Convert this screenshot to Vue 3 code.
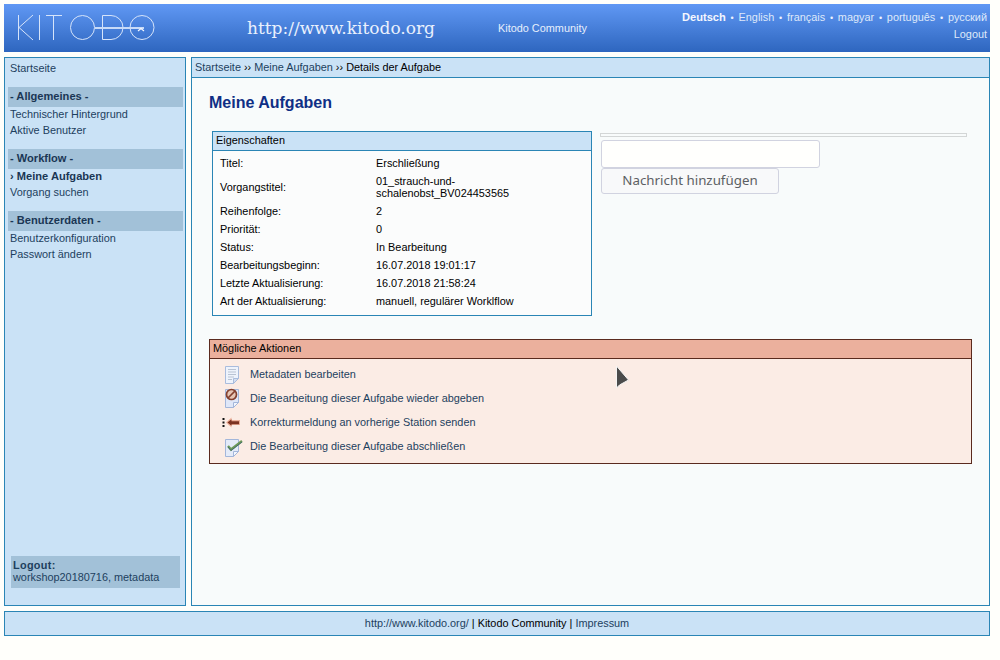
<template>
  <div class="page">
    <header class="top">
      <svg class="logo" width="140" height="28" viewBox="0 0 140 28" fill="none" stroke="#d6e4fa" stroke-width="1">
        <!-- K I T -->
        <path d="M1.500 1v25M16 1 2 13.500 16 26M22.500 1v25M29 1.500h16M36.500 1.500V26" />
        <!-- O D O, the line through them ends in a small arrow -->
        <circle cx="65.500" cy="13.500" r="12" />
        <path d="M85.500 1.500h8.500a12 12 0 0 1 0 24h-8.500z" />
        <circle cx="125" cy="13.500" r="12" />
        <path d="M78 14h49" stroke="#c8dbf8" stroke-width="2" />
        <path d="M121 17l3-2.500 3 2.500" stroke="#f6f9ff" stroke-width="1.200" />
      </svg>
      <span class="site-url">http://www.kitodo.org</span>
      <span class="community">Kitodo Community</span>
      <div class="top-right">
        <div class="langs">
          <template v-for="(l, i) in langs" :key="l">
            <span v-if="i" class="sep">•</span>
            <a :class="{ 'lang-active': i === 0 }">{{ l }}</a>
          </template>
        </div>
        <a class="logout-link">Logout</a>
      </div>
    </header>

    <div class="middle">
      <aside class="side">
        <a class="side-home">Startseite</a>
        <section v-for="g in menu" :key="g.title" class="side-group">
          <h4>{{ g.title }}</h4>
          <a v-for="item in g.items" :key="item.label" :class="{ current: item.current }">{{ item.label }}</a>
        </section>
        <div class="side-logout">
          <strong>Logout:</strong>
          <span>workshop20180716, metadata</span>
        </div>
      </aside>

      <main class="content">
        <div class="crumbs"><a>Startseite</a> ›› <a>Meine Aufgaben</a> ›› Details der Aufgabe</div>
        <h1>Meine Aufgaben</h1>

        <div class="details-row">
          <div class="props">
            <div class="props-head">Eigenschaften</div>
            <table>
              <tbody>
                <tr v-for="p in properties" :key="p[0]">
                  <td class="prop-key">{{ p[0] }}</td>
                  <td class="prop-val">{{ p[1] }}</td>
                </tr>
              </tbody>
            </table>
          </div>
          <div class="messages">
            <hr />
            <input type="text" />
            <button type="button">Nachricht hinzufügen</button>
          </div>
        </div>

        <div class="actions">
          <div class="actions-head">Mögliche Aktionen</div>
          <div class="actions-body">
            <a class="action">
              <svg width="22" height="24" viewBox="0 0 22 24">
                <path d="M3.500 4.500h13v12l-5 5h-8z" fill="#eef3fc" stroke="#a9bcdd" />
                <path d="M16.500 16.500h-5v5z" fill="#d5dff0" stroke="#a9bcdd" />
                <path d="M6 7.500h8M6 10h8M6 12.500h8M6 15h6M6 17.500h4" stroke="#b9c3d3" />
              </svg>
              <span>Metadaten bearbeiten</span>
            </a>
            <a class="action">
              <svg width="22" height="24" viewBox="0 0 22 24">
                <path d="M3.500 3.500h13v13l-5 5h-8z" fill="#dfe7f8" stroke="#a3b6da" />
                <path d="M16.500 16.500h-5v5z" fill="#f2f5fc" stroke="#a3b6da" />
                <circle cx="9.500" cy="8.500" r="5" fill="#e6c5b4" stroke="#84402f" stroke-width="1.700" />
                <path d="M6 12 13 5" stroke="#84402f" stroke-width="1.700" />
              </svg>
              <span>Die Bearbeitung dieser Aufgabe wieder abgeben</span>
            </a>
            <a class="action">
              <svg width="22" height="24" viewBox="0 0 22 24">
                <path d="M1.500 8v2M1.500 11.500v2M1.500 15v2" stroke="#111" stroke-width="2" />
                <path d="M4 12.500l5.500-5v2.500h8.500v5h-8.500v2.500z" fill="#eeb09a" />
                <path d="M5.500 12.500l4-3.300v2h7.500v3h-7.500v1.600z" fill="#7c3220" />
              </svg>
              <span>Korrekturmeldung an vorherige Station senden</span>
            </a>
            <a class="action">
              <svg width="22" height="24" viewBox="0 0 22 24">
                <path d="M3.500 5.500h13v12l-5 5h-8z" fill="#e4ebf9" stroke="#a3b6da" />
                <path d="M16.500 17.500h-5v5z" fill="#f4f7fc" stroke="#a3b6da" />
                <path d="M6 12l3 3.500L20 7" fill="none" stroke="#6d9a58" stroke-width="2.400" />
                <path d="M6 13l3 3.500L20 8" fill="none" stroke="#2f5577" stroke-width="0.700" />
              </svg>
              <span>Die Bearbeitung dieser Aufgabe abschließen</span>
            </a>
          </div>
        </div>

        <!-- mouse pointer caught in the screenshot -->
        <svg class="pointer" width="16" height="26" viewBox="0 0 16 26">
          <path d="M1.500 1v22l3-3L13.500 15z" fill="#4b4b4b" stroke="#f4f4f4" stroke-width="1" />
        </svg>
      </main>
    </div>

    <footer class="foot">
      <a>http://www.kitodo.org/</a> | Kitodo Community | <a>Impressum</a>
    </footer>
  </div>
</template>

<script setup>
const langs = ['Deutsch', 'English', 'français', 'magyar', 'português', 'русский']

const menu = [
  {
    title: '- Allgemeines -',
    items: [{ label: 'Technischer Hintergrund' }, { label: 'Aktive Benutzer' }],
  },
  {
    title: '- Workflow -',
    items: [{ label: '› Meine Aufgaben', current: true }, { label: 'Vorgang suchen' }],
  },
  {
    title: '- Benutzerdaten -',
    items: [{ label: 'Benutzerkonfiguration' }, { label: 'Passwort ändern' }],
  },
]

const properties = [
  ['Titel:', 'Erschließung'],
  ['Vorgangstitel:', '01_strauch-und-schalenobst_BV024453565'],
  ['Reihenfolge:', '2'],
  ['Priorität:', '0'],
  ['Status:', 'In Bearbeitung'],
  ['Bearbeitungsbeginn:', '16.07.2018 19:01:17'],
  ['Letzte Aktualisierung:', '16.07.2018 21:58:24'],
  ['Art der Aktualisierung:', 'manuell, regulärer Worklflow'],
]
</script>

<style>
html,
body {
  margin: 0;
  background: #fffffb;
}
</style>

<style scoped>
.page {
  width: 986px;
  padding: 4px 10px 0 4px;
  font-family: "Liberation Sans", Arial, sans-serif;
  font-size: 10.880px;
  line-height: 12px;
  color: #000;
}

a {
  color: #1d3f5e;
  text-decoration: none;
}

/* top bar */
.top {
  position: relative;
  display: flex;
  align-items: center;
  height: 48px;
  background: linear-gradient(#6098f4, #2e66bf);
  color: #e6effc;
}

.logo {
  margin-left: 13px;
  flex: none;
}

.site-url {
  margin-left: 90px;
  width: 251px;
  font-family: "DejaVu Serif", serif;
  font-size: 17px;
  line-height: 48px;
  color: #eaf1fd;
}

.top-right {
  position: absolute;
  top: 5px;
  right: 3px;
  text-align: right;
  line-height: 16px;
}

.top-right a {
  color: #dfe9fa;
}

.top-right .lang-active {
  font-weight: bold;
  font-size: 11.100px;
  color: #f4f7fe;
}

.sep {
  margin: 0 4.800px;
  color: #eef3fd;
  font-size: 9px;
}

.logout-link {
  display: block;
}

/* sidebar + content */
.middle {
  display: flex;
  gap: 5px;
  height: 549px;
  margin-top: 5px;
}

.side {
  box-sizing: border-box;
  flex: 0 0 182px;
  display: flex;
  flex-direction: column;
  padding: 0 2px 17px 3px;
  background: #cae2f6;
  border: 1px solid #2a85b5;
}

.side a {
  display: block;
  padding-left: 2px;
  line-height: 16px;
}

.side-home {
  margin-top: 2px;
  margin-bottom: 11px;
}

.side-group {
  margin-bottom: 11px;
}

.side-group h4 {
  height: 20px;
  margin: 0 0 -1px;
  padding-left: 2px;
  font-size: 11.100px;
  line-height: 19px;
  color: #1a3654;
  background: #a2c1d8;
}

.side a.current {
  font-weight: bold;
  font-size: 11.100px;
  color: #1a3654;
}

.side-logout {
  display: flex;
  flex-direction: column;
  margin: auto 3px 0 3px;
  height: 32px;
  padding: 3px 2px 0;
  box-sizing: border-box;
  background: #a2c1d8;
  color: #1d3f5e;
  line-height: 12px;
}

.side-logout strong {
  letter-spacing: 0.3px;
}

.content {
  position: relative;
  box-sizing: border-box;
  flex: 1;
  background: #f8fbfb;
  border: 1px solid #2a85b5;
}

.crumbs {
  height: 19px;
  padding-left: 3px;
  line-height: 19px;
  background: #cae2f6;
  border-bottom: 1px solid #2a85b5;
}

h1 {
  margin: 16px 0 0 17px;
  font-size: 16px;
  line-height: 18px;
  color: #0f2f85;
}

.details-row {
  display: flex;
  align-items: flex-start;
  margin: 19px 0 0 20px;
}

.props {
  box-sizing: border-box;
  flex: 0 0 380px;
  height: 185px;
  border: 1px solid #2a85b5;
  background: #fbfcfc;
}

.props-head {
  height: 18px;
  padding-left: 3px;
  line-height: 17px;
  background: #cae2f6;
  border-bottom: 1px solid #2a85b5;
}

table {
  margin: 3px 0 0 7px;
  border-collapse: collapse;
}

td {
  padding: 3px 0;
  vertical-align: middle;
}

.prop-key {
  width: 156px;
}

.prop-val {
  width: 140px;
}

.messages {
  display: flex;
  flex-direction: column;
  align-items: flex-start;
  flex: 0 0 367px;
  margin-left: 8px;
  padding-top: 2px;
}

hr {
  box-sizing: border-box;
  width: 367px;
  height: 4px;
  margin: 0 0 3px;
  border: 1px solid #d3d6d6;
  background: #f8fbfb;
}

input {
  box-sizing: border-box;
  width: 219px;
  height: 28px;
  margin: 0 0 0 1px;
  border: 1px solid #d1d3e0;
  border-radius: 3px;
  background: #fffffd;
}

button {
  box-sizing: border-box;
  width: 178px;
  height: 26px;
  margin: 0 0 0 1px;
  padding: 0 0 2px;
  border: 1px solid #d1d3e0;
  border-radius: 3px;
  background: #f8f9fa;
  font-family: "Noto Sans", sans-serif;
  font-size: 13.330px;
  color: #5c5f63;
}

.actions {
  box-sizing: border-box;
  width: 763px;
  height: 125px;
  margin: 23px 0 0 17px;
  border: 1px solid #5a2a1e;
  background: #fbece5;
}

.actions-head {
  height: 18px;
  padding-left: 3px;
  line-height: 17px;
  background: #ebb09d;
  border-bottom: 1px solid #5a2a1e;
}

.actions-body {
  padding: 3px 0 0 12px;
}

.action {
  display: flex;
  align-items: center;
  gap: 6px;
  height: 24px;
}

.action svg {
  flex: none;
}

.pointer {
  position: absolute;
  left: 423px;
  top: 307px;
}

.foot {
  box-sizing: border-box;
  height: 25px;
  margin-top: 5px;
  line-height: 23px;
  text-align: center;
  background: #cae2f6;
  border: 1px solid #2a85b5;
}
</style>
